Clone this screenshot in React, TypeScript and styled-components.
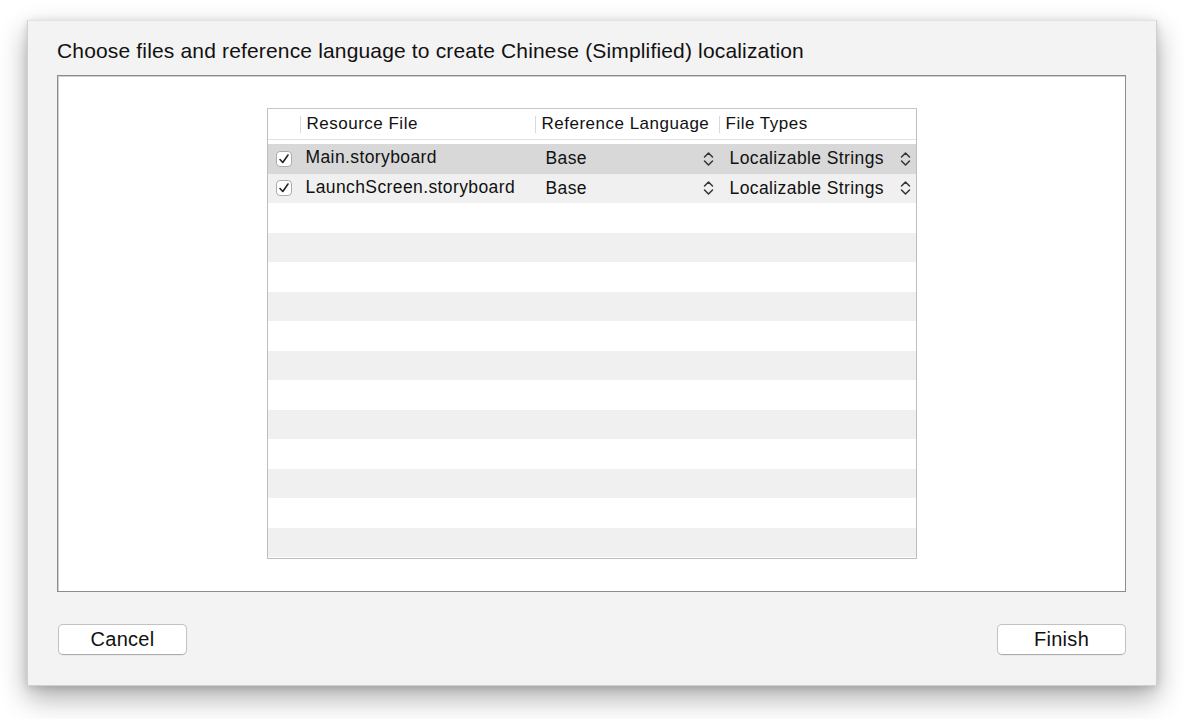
import styled, { createGlobalStyle } from "styled-components";

const GlobalStyle = createGlobalStyle`
  html, body {
    margin: 0;
    padding: 0;
    background: #ffffff;
    font-family: "Liberation Sans", Arial, sans-serif;
    color: #111;
  }
`;

const files = [
  { name: "Main.storyboard", lang: "Base", type: "Localizable Strings", selected: true },
  { name: "LaunchScreen.storyboard", lang: "Base", type: "Localizable Strings", selected: false },
];

const TOTAL_ROWS = 14;

const Page = styled.div`
  padding: 20px 0 40px 27px;
`;

const Sheet = styled.div`
  width: 1130px;
  height: 666px;
  box-sizing: border-box;
  background: #f3f3f3;
  border: 1px solid #d0d0d0;
  border-top-color: #e2e2e2;
  box-shadow: 0 12px 26px rgba(0, 0, 0, 0.32), 0 2px 8px rgba(0, 0, 0, 0.14);
  padding: 17px 30px 0 29px;
  display: flex;
  flex-direction: column;
`;

const Title = styled.h1`
  margin: 0;
  font-size: 21px;
  font-weight: normal;
  line-height: 26px;
  height: 37px;
  letter-spacing: 0.16px;
`;

const Well = styled.div`
  height: 517px;
  box-sizing: border-box;
  background: #fff;
  border: 1px solid #8c8c8c;
  box-shadow: inset 1px 1px 0 #cfcfcf;
  display: flex;
  justify-content: center;
  padding-top: 32px;
`;

const Table = styled.div`
  width: 650px;
  height: 451px;
  box-sizing: border-box;
  border: 1px solid #bdbdbd;
  border-top-color: #c6c6c6;
  background: #fff;
  overflow: hidden;
`;

const Grid = `
  display: grid;
  grid-template-columns: 32px 235px 184px 197px;
`;

const Header = styled.div`
  ${Grid}
  height: 30px;
  border-bottom: 1px solid #e1e1e1;
  margin-bottom: 4px;
  font-size: 17px;
  letter-spacing: 0.5px;
  align-items: center;
`;

const HeadCell = styled.div<{ $sep?: boolean }>`
  height: 100%;
  display: flex;
  align-items: center;
  padding-left: 7px;
  position: relative;
  box-sizing: border-box;
  white-space: nowrap;
  &::before {
    content: "";
    display: ${(p) => (p.$sep ? "block" : "none")};
    position: absolute;
    left: 0;
    top: 7px;
    bottom: 6px;
    width: 1px;
    background: #d9d9d9;
  }
`;

const Row = styled.div<{ $bg: string }>`
  ${Grid}
  height: 29.5px;
  background: ${(p) => p.$bg};
  align-items: center;
  font-size: 17.5px;
  letter-spacing: 0.4px;
  white-space: nowrap;
`;

const CheckCell = styled.div`
  display: flex;
  justify-content: center;
  padding-left: 1px;
`;

const CheckBox = styled.div`
  width: 16px;
  height: 16px;
  box-sizing: border-box;
  border: 1px solid #acacac;
  border-radius: 4px;
  background: #fff;
  display: flex;
  align-items: center;
  justify-content: center;
`;

const NameCell = styled.div`
  padding-left: 6px;
  padding-bottom: 2px;
`;

const PopupCell = styled.div<{ $pad: number }>`
  display: flex;
  align-items: center;
  justify-content: space-between;
  padding-left: ${(p) => p.$pad}px;
  padding-right: 5px;
`;

const Footer = styled.div`
  display: flex;
  justify-content: space-between;
  padding: 32px 0 0 1px;
`;

const Button = styled.button`
  width: 129px;
  height: 31px;
  background: #fff;
  border: 1px solid #c2c2c2;
  border-bottom-color: #acacac;
  border-radius: 5px;
  font-family: "Liberation Sans", Arial, sans-serif;
  font-size: 20px;
  letter-spacing: 0.3px;
  color: #111;
  padding: 0;
  box-shadow: 0 1px 0 rgba(0, 0, 0, 0.04);
`;

function Check() {
  return (
    <svg width="12" height="12" viewBox="0 0 12 12">
      <path d="M2 6.5 L4.8 9.5 L10 2" fill="none" stroke="#222" strokeWidth="1.6" strokeLinecap="round" strokeLinejoin="round" />
    </svg>
  );
}

function Stepper() {
  return (
    <svg width="11" height="16" viewBox="0 0 11 16">
      <path d="M1.5 6 L5.5 2 L9.5 6 M1.5 10 L5.5 14 L9.5 10" fill="none" stroke="#333" strokeWidth="1.5" strokeLinecap="round" strokeLinejoin="round" />
    </svg>
  );
}

export default function App() {
  const rows = Array.from({ length: TOTAL_ROWS }, (_, i) => i);
  return (
    <Page>
      <GlobalStyle />
      <Sheet>
        <Title>Choose files and reference language to create Chinese (Simplified) localization</Title>
        <Well>
          <Table>
            <Header>
              <HeadCell />
              <HeadCell $sep>Resource File</HeadCell>
              <HeadCell $sep>Reference Language</HeadCell>
              <HeadCell $sep>File Types</HeadCell>
            </Header>
            {rows.map((i) => {
              const f = files[i];
              const bg = f?.selected ? "#d8d8d8" : i % 2 === 1 ? "#f0f0f0" : "#ffffff";
              return (
                <Row key={i} $bg={bg}>
                  {f ? (
                    <>
                      <CheckCell>
                        <CheckBox>
                          <Check />
                        </CheckBox>
                      </CheckCell>
                      <NameCell>{f.name}</NameCell>
                      <PopupCell $pad={11}>
                        <span>{f.lang}</span>
                        <Stepper />
                      </PopupCell>
                      <PopupCell $pad={11}>
                        <span>{f.type}</span>
                        <Stepper />
                      </PopupCell>
                    </>
                  ) : null}
                </Row>
              );
            })}
          </Table>
        </Well>
        <Footer>
          <Button>Cancel</Button>
          <Button>Finish</Button>
        </Footer>
      </Sheet>
    </Page>
  );
}
